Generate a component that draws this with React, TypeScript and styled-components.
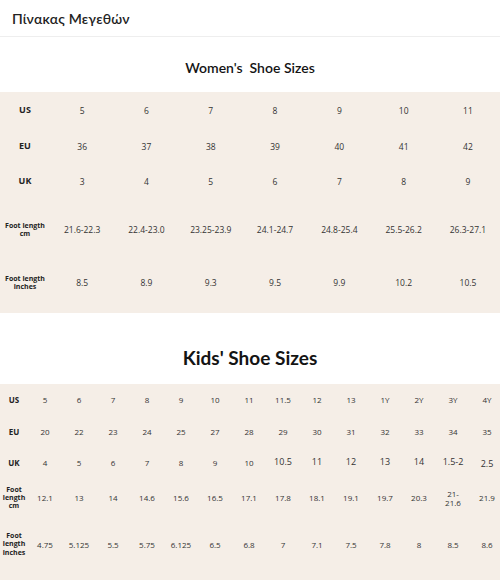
import React from "react";
import styled, { createGlobalStyle } from "styled-components";

const GlobalStyle = createGlobalStyle`
  html, body {
    margin: 0;
    padding: 0;
    background: #ffffff;
  }
  body {
    font-family: "Open Sans", "Noto Sans", "DejaVu Sans", sans-serif;
    color: #2b2b2b;
  }
`;

const Page = styled.div`
  width: 500px;
  height: 580px;
  overflow: hidden;
  display: flex;
  flex-direction: column;
`;

const Header = styled.div`
  height: 37px;
  flex-shrink: 0;
  box-sizing: border-box;
  padding: 0 12px;
  display: flex;
  align-items: center;
  border-bottom: 1px solid #eeeeee;
  font-family: "Lato", "Noto Sans", sans-serif;
  font-size: 14px;
  font-weight: 600;
  color: #222;
  letter-spacing: 0.2px;
`;

const Title = styled.h2<{ $size: number; $top: number; $bottom: number }>`
  margin: 0;
  flex-shrink: 0;
  padding: ${(p) => p.$top}px 0 ${(p) => p.$bottom}px;
  text-align: center;
  font-family: "Lato", "Noto Sans", sans-serif;
  font-size: ${(p) => p.$size}px;
  line-height: ${(p) => Math.round(p.$size * 1.35)}px;
  font-weight: ${(p) => (p.$size > 15 ? 700 : 600)};
  color: #141414;
  white-space: pre;
`;

const Chart = styled.div<{ $label: number; $col: number; $count: number; $tail: number }>`
  flex-shrink: 0;
  background: #f5eee7;
  display: grid;
  grid-template-columns: ${(p) => p.$label}px repeat(${(p) => p.$count}, ${(p) => p.$col}px);
  padding-bottom: ${(p) => p.$tail}px;
  width: 500px;
  overflow: hidden;
`;

const Cell = styled.div<{ $h: number; $size: number; $drop?: number }>`
  height: ${(p) => p.$h}px;
  display: flex;
  align-items: center;
  justify-content: center;
  text-align: center;
  padding-top: ${(p) => (p.$drop ?? 0) * 3}px;
  box-sizing: border-box;
  font-size: ${(p) => p.$size}px;
  line-height: 1.15;
  color: #333;
  white-space: pre-line;
`;

const Label = styled(Cell)`
  font-weight: 700;
  color: #222;
`;

type Row = {
  label: string;
  h: number;
  labelSize: number;
  values: string[];
  bigFrom?: number;
};

const women: Row[] = [
  { label: "US", h: 37, labelSize: 9, values: ["5", "6", "7", "8", "9", "10", "11"] },
  { label: "EU", h: 35, labelSize: 9, values: ["36", "37", "38", "39", "40", "41", "42"] },
  { label: "UK", h: 35, labelSize: 9, values: ["3", "4", "5", "6", "7", "8", "9"] },
  {
    label: "Foot length\ncm",
    h: 62,
    labelSize: 7,
    values: ["21.6-22.3", "22.4-23.0", "23.25-23.9", "24.1-24.7", "24.8-25.4", "25.5-26.2", "26.3-27.1"],
  },
  {
    label: "Foot length\ninches",
    h: 44,
    labelSize: 7,
    values: ["8.5", "8.9", "9.3", "9.5", "9.9", "10.2", "10.5"],
  },
];

const kids: Row[] = [
  {
    label: "US",
    h: 32,
    labelSize: 8,
    values: ["5", "6", "7", "8", "9", "10", "11", "11.5", "12", "13", "1Y", "2Y", "3Y", "4Y"],
  },
  {
    label: "EU",
    h: 31,
    labelSize: 8,
    values: ["20", "22", "23", "24", "25", "27", "28", "29", "30", "31", "32", "33", "34", "35"],
  },
  {
    label: "UK",
    h: 31,
    labelSize: 8,
    bigFrom: 7,
    values: ["4", "5", "6", "7", "8", "9", "10", "10.5", "11", "12", "13", "14", "1.5-2", "2.5"],
  },
  {
    label: "Foot\nlength\ncm",
    h: 40,
    labelSize: 7,
    values: ["12.1", "13", "14", "14.6", "15.6", "16.5", "17.1", "17.8", "18.1", "19.1", "19.7", "20.3", "21-\n21.6", "21.9"],
  },
  {
    label: "Foot\nlength\ninches",
    h: 53,
    labelSize: 7,
    values: ["4.75", "5.125", "5.5", "5.75", "6.125", "6.5", "6.8", "7", "7.1", "7.5", "7.8", "8", "8.5", "8.6"],
  },
];

function SizeChart({
  rows,
  label,
  col,
  size,
  tail,
}: {
  rows: Row[];
  label: number;
  col: number;
  size: number;
  tail: number;
}) {
  const count = rows[0].values.length;
  return (
    <Chart $label={label} $col={col} $count={count} $tail={tail}>
      {rows.map((row) => (
        <React.Fragment key={row.label}>
          <Label $h={row.h} $size={row.labelSize}>
            {row.label}
          </Label>
          {row.values.map((v, i) => {
            const big = row.bigFrom !== undefined && i >= row.bigFrom;
            return (
              <Cell
                key={i}
                $h={row.h}
                $size={big ? size + 1 : size}
                $drop={big && i === count - 1 ? 1 : 0}
              >
                {v}
              </Cell>
            );
          })}
        </React.Fragment>
      ))}
    </Chart>
  );
}

export default function App() {
  return (
    <Page>
      <GlobalStyle />
      <Header>Πίνακας Μεγεθών</Header>
      <Title $size={14} $top={21} $bottom={15}>
        {"Women's  Shoe Sizes"}
      </Title>
      <SizeChart rows={women} label={50} col={64.3} size={8.5} tail={8} />
      <Title $size={19} $top={32} $bottom={13}>
        {"Kids' Shoe Sizes"}
      </Title>
      <SizeChart rows={kids} label={28} col={34} size={8} tail={20} />
    </Page>
  );
}
